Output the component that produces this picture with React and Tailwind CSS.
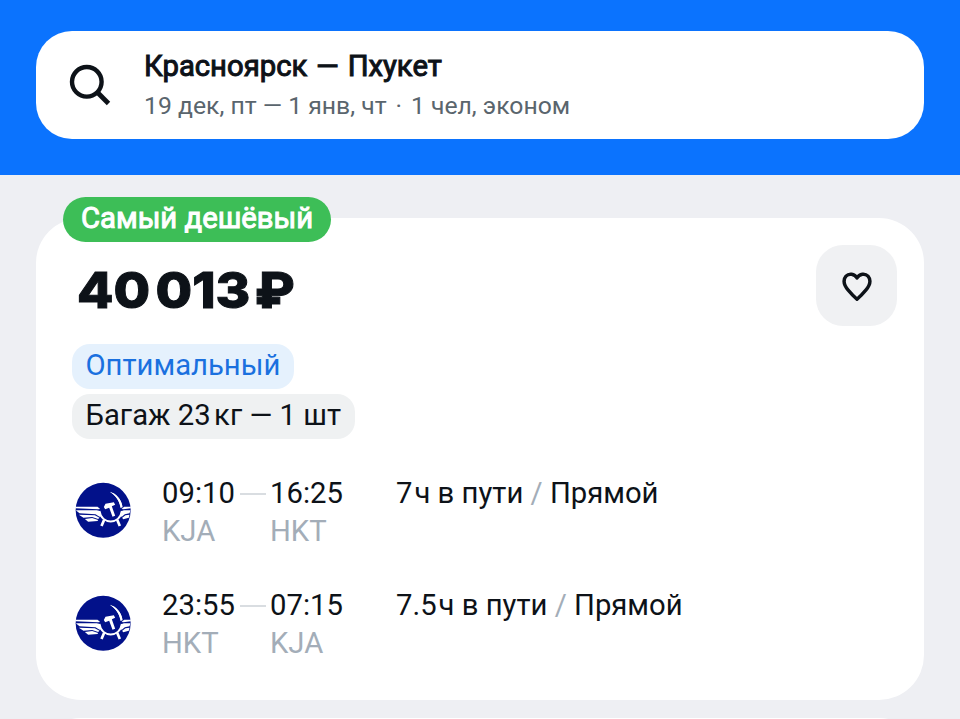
const flights = [
    {
        departure: "09:10",
        arrival: "16:25",
        from: "KJA",
        to: "HKT",
        hours: "7",
    },
    {
        departure: "23:55",
        arrival: "07:15",
        from: "HKT",
        to: "KJA",
        hours: "7.5",
    },
];

const SearchIcon = () => (
    <svg className="w-[42px] h-[42px]" viewBox="0 0 42 42" fill="none">
        <circle cx="17.8" cy="17.8" r="14.8" stroke="#0d1218" strokeWidth="4.4" />
        <path d="M28.3 28.3L39.5 39.5" stroke="#0d1218" strokeWidth="4.8" />
    </svg>
);

const HeartIcon = () => (
    <svg className="w-[32px] h-[32px]" viewBox="0 0 32 32" fill="none">
        <path
            d="M16 8C13.5 3.4 7.8 3.2 5 6.2C1.6 10.2 3.5 15.7 7.2 20.2C10 23.6 13.2 26.8 16 29.3C18.8 26.8 22 23.6 24.8 20.2C28.5 15.7 30.4 10.2 27 6.2C24.2 3.2 18.5 3.4 16 8Z"
            stroke="#0d1218"
            strokeWidth="3.4"
            strokeLinejoin="round"
        />
    </svg>
);

const AirlineLogo = () => (
    <svg className="w-[56px] h-[56px] shrink-0" viewBox="10.5 6 168 168">
        <circle cx="95" cy="91" r="82.5" fill="#02118a" />
        {/* wings */}
        <g fill="#fff">
            <path d="M12 80H78L86 87L80 88L12 85Z" />
            <path d="M13 91L76 91L85 93L92 108L84 110L72 103L24 100Z" />
            <path d="M22 104L70 106L84 113L80 117L62 111L36 113Z" />
            <path d="M40 117L62 114L80 120L78 123L50 125Z" />
            <path d="M178 80H158L150 87L156 88L178 85Z" />
            <path d="M177 91H157L151 93L145 108L151 110L160 103L174 100Z" />
            <path d="M174 104L162 106L152 113L155 118L172 113Z" />
        </g>
        {/* sickle */}
        <path
            d="M115 35C134 41 150 57 153 80L147 80C144 61 132 46 115 35Z"
            fill="#fff"
        />
        <circle cx="118" cy="92" r="32" fill="#02118a" />
        <path
            d="M115 35C134 41 150 57 153 82L147 84C144 61 132 46 115 35Z"
            fill="#fff"
        />
        <path
            d="M84 93C90 135 145 135 151 93"
            stroke="#fff"
            strokeWidth="5.5"
            fill="none"
        />
        {/* hammer */}
        <path
            d="M97 81L102 71L127 67L131 74L121 79L131 107L123 110L113 83L101 88Z"
            fill="#fff"
        />
        <path
            d="M98 119L90 138M137 119L145 138"
            stroke="#fff"
            strokeWidth="8"
            fill="none"
        />
    </svg>
);

const SearchBar = () => (
    <header className="h-[175px] px-9 pt-[31px] bg-[#0b73fe]">
        <div className="flex h-[108px] rounded-[36px] bg-white">
            <div className="w-[108px] pl-[33px] pt-[33px]">
                <SearchIcon />
            </div>
            <div className="pt-[17px] whitespace-nowrap">
                <h1 className="h-[38px] text-[29.25px] leading-[36px] font-normal [-webkit-text-stroke:1px_#0d1218] text-[#0d1218]">
                    Красноярск<span className="mx-[1.5px]"> — </span>Пхукет
                </h1>
                <p className="text-[24.75px] leading-[40px] text-[#5a656d]">
                    19 дек, пт — 1 янв, чт<span className="mx-[2.75px]"> · </span>1 чел, эконом
                </p>
            </div>
        </div>
    </header>
);

const Flight = ({ flight }) => (
    <div className="flex h-[112.3px] whitespace-nowrap">
        <div className="w-[87px] pl-[0.4px] pt-[8.4px]">
            <AirlineLogo />
        </div>
        <div className="w-[234px] grid grid-cols-[108px_1fr] content-start leading-[38px]">
            <div className="flex items-center">
                <span>{flight.departure}</span>
                <span className="ml-[5px] mt-[1px] w-[26px] h-[2px] bg-[#d9dde1]" />
            </div>
            <span>{flight.arrival}</span>
            <span className="text-[#a3adb8]">{flight.from}</span>
            <span className="text-[#a3adb8]">{flight.to}</span>
        </div>
        <div className="leading-[38px]">
            {flight.hours}
            <span className="ml-[2px]">ч в пути</span>
            <span className="text-[#a3adb8]"> / </span>
            Прямой
        </div>
    </div>
);

const TicketCard = () => (
    <section className="relative mt-[43px] h-[482px] pl-9 pr-[27px] pt-[27px] rounded-[45px] bg-white">
        <span className="absolute left-[27px] top-[-21px] h-[45px] px-[18px] rounded-full bg-[#3dbe57] text-white [-webkit-text-stroke:1px_#fff] leading-[43px] whitespace-nowrap">
            Самый дешёвый
        </span>
        <div className="flex justify-between h-[99px]">
            <div className="ml-[5px] flex w-[220px] h-[90px] items-center origin-left scale-x-[1.06] font-[Inter] text-[50px] font-extrabold text-[#0d1218] [-webkit-text-stroke:1px_#0d1218] whitespace-nowrap">
                <span>40</span>
                <span className="ml-[5px]">013</span>
                <span className="ml-[4px]">₽</span>
            </div>
            <button className="flex items-center justify-center size-[81px] rounded-[27px] bg-[#f0f1f3]">
                <HeartIcon />
            </button>
        </div>
        <div className="flex flex-col items-start gap-[5px] whitespace-nowrap">
            <span className="h-[45px] px-[13.5px] rounded-[18px] bg-[#e5f1fd] text-[#1a70df] leading-[43px]">
                Оптимальный
            </span>
            <span className="h-[45px] pl-[13.5px] pr-[14px] rounded-[18px] bg-[#eff1f2] leading-[43px]">
                Багаж 23<span className="ml-[3.5px]">кг — 1 шт</span>
            </span>
        </div>
        <div className="pl-[3px] pt-[35px]">
            {flights.map((flight, index) => (
                <Flight key={index} flight={flight} />
            ))}
        </div>
    </section>
);

const App = () => (
    <div className="h-[719px] overflow-hidden bg-[#eeeff3] font-[Roboto,sans-serif] text-[29.25px] text-[#0d1218]">
        <SearchBar />
        <main className="px-9">
            <TicketCard />
            <section className="mt-[18px] h-[90px] rounded-[45px] bg-white" />
        </main>
    </div>
);

export default App;
